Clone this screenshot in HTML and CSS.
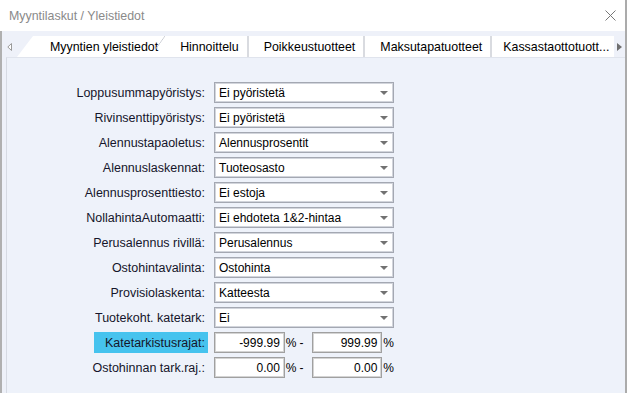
FILE: index.html
```html
<!DOCTYPE html>
<html lang="fi">
<head>
  <meta charset="UTF-8">
  <title>Myyntilaskut / Yleistiedot</title>
  <link rel="stylesheet" href="styles.css">
</head>
<body>
  <div class="window">
    <!-- Title bar -->
    <div class="titlebar">
      <span class="title">Myyntilaskut / Yleistiedot</span>
      <svg class="close" width="11" height="11" viewBox="0 0 11 11">
        <path d="M0.5 0.5 L10.5 10.5 M10.5 0.5 L0.5 10.5" stroke="#777" stroke-width="1" fill="none"/>
      </svg>
    </div>

    <div class="main">
      <!-- Tabs -->
      <div class="tabstrip">
        <div class="scroll-left">
          <svg width="5" height="8" viewBox="0 0 5 8"><path d="M4.5 0.5 L0.8 4 L4.5 7.5 Z" fill="#fff" stroke="#9a9a9a"/></svg>
        </div>
        <div class="tabs">
          <div class="tab active">Myyntien yleistiedot</div>
          <div class="tab">Hinnoittelu</div>
          <div class="tab">Poikkeustuotteet</div>
          <div class="tab">Maksutapatuotteet</div>
          <div class="tab">Kassastaottotuott...</div>
        </div>
        <div class="scroll-right">
          <svg width="5" height="8" viewBox="0 0 5 8"><path d="M0 0 L5 4 L0 8 Z" fill="#6f6f6f"/></svg>
        </div>
      </div>

      <!-- Form panel -->
      <div class="panel">
        <div class="form">
          <div class="label">Loppusummapyöristys:</div>
          <div class="combo"><span>Ei pyöristetä</span><i class="caret"></i></div>

          <div class="label">Rivinsenttipyöristys:</div>
          <div class="combo"><span>Ei pyöristetä</span><i class="caret"></i></div>

          <div class="label">Alennustapaoletus:</div>
          <div class="combo"><span>Alennusprosentit</span><i class="caret"></i></div>

          <div class="label">Alennuslaskennat:</div>
          <div class="combo"><span>Tuoteosasto</span><i class="caret"></i></div>

          <div class="label">Alennusprosenttiesto:</div>
          <div class="combo"><span>Ei estoja</span><i class="caret"></i></div>

          <div class="label">NollahintaAutomaatti:</div>
          <div class="combo"><span>Ei ehdoteta 1&amp;2-hintaa</span><i class="caret"></i></div>

          <div class="label">Perusalennus rivillä:</div>
          <div class="combo"><span>Perusalennus</span><i class="caret"></i></div>

          <div class="label">Ostohintavalinta:</div>
          <div class="combo"><span>Ostohinta</span><i class="caret"></i></div>

          <div class="label">Provisiolaskenta:</div>
          <div class="combo"><span>Katteesta</span><i class="caret"></i></div>

          <div class="label">Tuotekoht. katetark:</div>
          <div class="combo"><span>Ei</span><i class="caret"></i></div>

          <div class="label focus"><span class="hl">Katetarkistusrajat:</span></div>
          <div class="range">
            <span class="num">-999.99</span><span class="pct">%</span><span class="dash">-</span>
            <span class="num">999.99</span><span class="pct">%</span>
          </div>

          <div class="label">Ostohinnan tark.raj.:</div>
          <div class="range">
            <span class="num">0.00</span><span class="pct">%</span><span class="dash">-</span>
            <span class="num">0.00</span><span class="pct">%</span>
          </div>
        </div>
      </div>
    </div>
  </div>
</body>
</html>
```

FILE: styles.css
```css
/* Reset */
body, html {
  margin: 0;
  padding: 0;
  overflow: hidden;
  background-color: #fff;
  font-family: "Liberation Sans", Arial, sans-serif;
}

.window {
  width: 627px;
  height: 393px;
  box-sizing: border-box;
  display: flex;
  flex-direction: column;
  border-right: 2px solid #ababab;
}

/* Title bar */
.titlebar {
  height: 31px;
  flex: none;
  display: flex;
  align-items: center;
  justify-content: space-between;
  padding: 0 9px 0 9px;
  background-color: #fff;
}

.title {
  font-size: 12.4px;
  color: #8a8a8a;
}

.main {
  flex: 1;
  display: flex;
  flex-direction: column;
  background-color: #eef1f9;
  border-left: 2px solid #b0b0b0;
}

/* Tab strip */
.tabstrip {
  height: 26px;
  flex: none;
  display: flex;
  align-items: flex-end;
}

.scroll-left {
  flex: none;
  width: 15px;
  height: 21px;
  display: flex;
  align-items: center;
  justify-content: center;
}

.scroll-right {
  flex: none;
  width: 11px;
  height: 21px;
  display: flex;
  align-items: center;
  justify-content: center;
}

.tabs {
  display: flex;
  flex: 1;
  min-width: 0;
}

.tab {
  position: relative;
  flex: none;
  height: 21px;
  box-sizing: border-box;
  display: flex;
  align-items: center;
  padding: 0 8px 0 15px;
  background-color: #fff;
  border-right: 2px solid #d9dbe0;
  font-size: 12.4px;
  color: #000;
  white-space: nowrap;
}

.tab:last-child {
  flex: 1;
  padding: 0 0 0 11px;
  border-right: none;
}

.tab.active {
  padding-left: 33px;
  padding-right: 7px;
  border-right: none;
  clip-path: polygon(0 100%, 16px 0, 100% 0, 100% 100%);
}

/* fold line on the right side of the selected tab */
.tab.active::after {
  content: "";
  position: absolute;
  right: 0;
  top: 0;
  width: 10px;
  height: 14px;
  background: linear-gradient(to bottom right, transparent calc(50% - 0.7px), #c9ccd3 50%, transparent calc(50% + 0.7px));
}

/* Panel */
.panel {
  flex: 1;
  margin-left: 4px;
  border-left: 1px solid #d6dae3;
  border-top: 1px solid #e0e4ed;
  background-color: #eef2fa;
  padding-top: 24px;
}

.form {
  display: grid;
  grid-template-columns: 201px 180px;
  grid-auto-rows: 21px;
  column-gap: 6px;
  row-gap: 4px;
}

.label {
  display: flex;
  align-items: center;
  justify-content: flex-end;
  padding-right: 3px;
  font-size: 12.5px;
  color: #15152a;
  white-space: nowrap;
}

.label.focus {
  padding-right: 0;
  align-items: stretch;
}

.hl {
  display: flex;
  align-items: center;
  padding: 0 3px 0 11px;
  background-color: #46c3ee;
}

.combo {
  box-sizing: border-box;
  display: flex;
  align-items: center;
  justify-content: space-between;
  padding: 0 5px 0 4px;
  background-color: #fff;
  border: 1px solid #a4a8b2;
  box-shadow: inset 0 0 0 1px #d2d5dc;
  font-size: 12px;
  color: #000;
}

.caret {
  width: 0;
  height: 0;
  border-left: 4px solid transparent;
  border-right: 4px solid transparent;
  border-top: 4px solid #727272;
}

.range {
  display: flex;
  align-items: center;
  font-size: 12px;
  color: #000;
}

.num {
  box-sizing: border-box;
  width: 72px;
  height: 21px;
  display: flex;
  align-items: center;
  justify-content: flex-end;
  padding-right: 4px;
  background-color: #fff;
  border: 1px solid #a0a0a0;
  box-shadow: inset 0 0 0 1px #d4d4d4;
}

.pct {
  margin-left: 1px;
}

.dash {
  margin: 0 8px 0 3px;
}
```
